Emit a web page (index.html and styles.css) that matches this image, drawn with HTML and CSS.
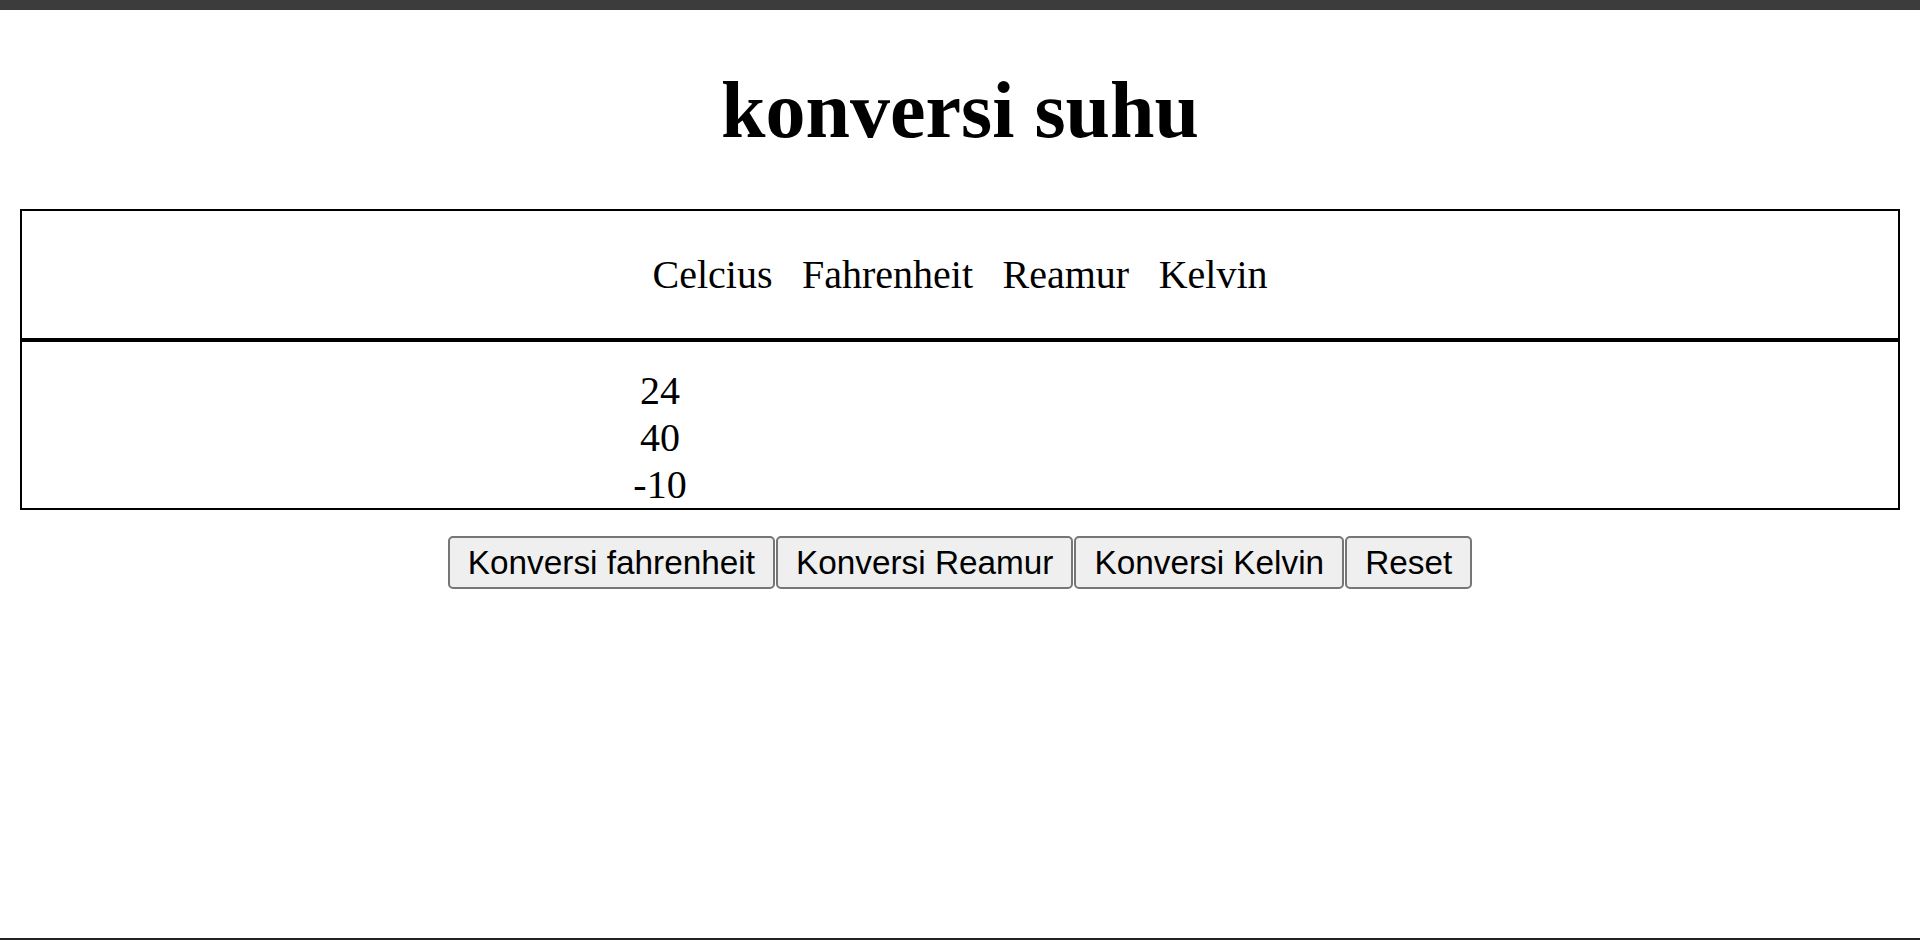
FILE: index.html
```html
<!DOCTYPE html>
<html lang="id">
<head>
<meta charset="utf-8">
<title>konversi suhu</title>
<link rel="stylesheet" href="styles.css">
</head>
<body>
<div class="topbar"></div>
<main class="page">
  <h1 class="title">konversi suhu</h1>
  <div class="table">
    <div class="thead">
      <span class="th">Celcius</span>
      <span class="th">Fahrenheit</span>
      <span class="th">Reamur</span>
      <span class="th">Kelvin</span>
    </div>
    <div class="tbody">
      <div class="col">
        <div class="cell">24</div>
        <div class="cell">40</div>
        <div class="cell">-10</div>
      </div>
    </div>
  </div>
  <div class="actions">
    <button class="btn" type="button">Konversi fahrenheit</button>
    <button class="btn" type="button">Konversi Reamur</button>
    <button class="btn" type="button">Konversi Kelvin</button>
    <button class="btn" type="button">Reset</button>
  </div>
</main>
<div class="bottombar"></div>
</body>
</html>
```
FILE: styles.css
```css
html, body {
  margin: 0;
  padding: 0;
  background: #ffffff;
}
body {
  height: 940px;
  display: flex;
  flex-direction: column;
  overflow: hidden;
  font-family: "Liberation Serif", "Times New Roman", serif;
  color: #000;
}
.topbar {
  height: 10px;
  flex: none;
  background: #3c3c3c;
}
.page {
  flex: 1;
  padding: 0 20px;
}
.title {
  margin: 53.6px 0;
  font-size: 80px;
  line-height: 92px;
  font-weight: bold;
  text-align: center;
}
.table {
  border: 2px solid #000;
}
.thead {
  display: flex;
  justify-content: center;
  gap: 29.5px;
  padding: 41px 0 40px;
  font-size: 40px;
  line-height: 46px;
  border-bottom: 4px solid #000;
}
.tbody {
  display: flex;
  padding: 25px 0 0 588px;
  font-size: 40px;
  line-height: 47px;
}
.col {
  width: 100px;
  text-align: center;
}
.actions {
  margin-top: 26px;
  display: flex;
  justify-content: center;
  gap: 1px;
}
.btn {
  height: 53px;
  padding: 0 18px;
  border: 2px solid #767676;
  border-radius: 5px;
  background: #efefef;
  color: #000;
  font-family: "Liberation Sans", Arial, sans-serif;
  font-size: 33.33px;
  line-height: 38px;
}
.bottombar {
  height: 2px;
  flex: none;
  background: #222222;
}
```
